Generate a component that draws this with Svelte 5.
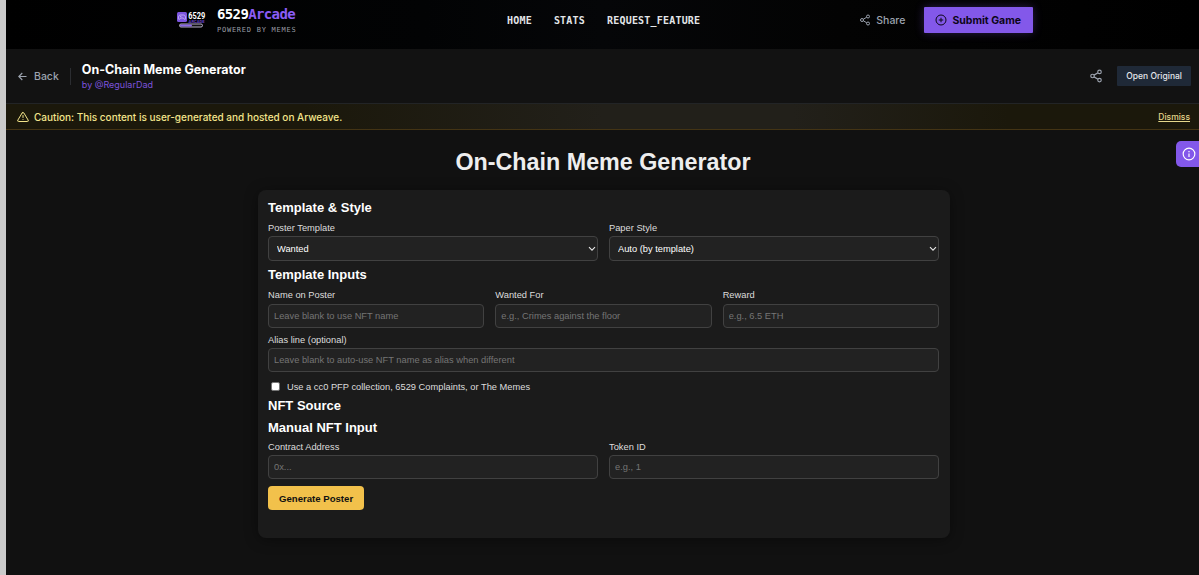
<script>
  let template = $state("wanted");
  let paper = $state("auto");
  let useCollection = $state(false);
  let showCaution = $state(true);

  const links = ["HOME", "STATS", "REQUEST_FEATURE"];
  const inputs = [
    { id: "name", label: "Name on Poster", placeholder: "Leave blank to use NFT name" },
    { id: "crime", label: "Wanted For", placeholder: "e.g., Crimes against the floor" },
    { id: "reward", label: "Reward", placeholder: "e.g., 6.5 ETH" }
  ];
</script>

{#snippet shareIcon(size)}
  <svg width={size} height={size} viewBox="0 0 24 24" fill="none" stroke="currentColor" stroke-width="2">
    <circle cx="18" cy="5" r="3" />
    <circle cx="6" cy="12" r="3" />
    <circle cx="18" cy="19" r="3" />
    <path d="M8.6 13.5l6.8 4M15.4 6.5l-6.8 4" />
  </svg>
{/snippet}

{#snippet chevron()}
  <svg class="chevron" width="8" height="6" viewBox="0 0 8 6" fill="none" stroke="#e8e8e8" stroke-width="1.1">
    <path d="M1 1.2l3 3 3-3" />
  </svg>
{/snippet}

<div class="page">
  <header>
    <div class="brand">
      <svg class="logo" width="29" height="19" viewBox="0 0 29 19">
        <rect x="0" y="1" width="10" height="10" rx="1.5" fill="#7c55e0" />
        <path d="M3.2 4h3.6c1.3 0 1.7 1.6 1.8 3.3.1 1.4-1.1 1.5-1.7.4L6.400 7H3.600L3.100 7.700c-.6 1.100-1.800 1-1.700-.4C1.500 5.600 1.900 4 3.200 4z" fill="none" stroke="#cbbcf6" stroke-width=".8" />
        <path d="M3.700 4.900v1.400M3 5.600h1.400" stroke="#cbbcf6" stroke-width=".6" />
        <text x="11.300" y="8.400" class="logo-num" textLength="17" lengthAdjust="spacingAndGlyphs">6529</text>
        <text x="11.600" y="12" class="logo-sub" textLength="16" lengthAdjust="spacingAndGlyphs">ARCADE</text>
        <rect x="2.500" y="13" width="23" height="3" rx="1.500" fill="#111" stroke="#c9c2dc" stroke-width=".9" />
        <rect x="3" y="13.500" width="12" height="2" rx="1" fill="#8b68ea" />
      </svg>
      <div class="brand-text">
        <div class="brand-name">6529<span>Arcade</span></div>
        <div class="tagline">POWERED BY MEMES</div>
      </div>
    </div>
    <nav>
      {#each links as link}
        <a href="#{link.toLowerCase()}">{link}</a>
      {/each}
    </nav>
    <div class="actions">
      <button class="share">{@render shareIcon(12)}<span>Share</span></button>
      <button class="submit">
        <svg width="12" height="12" viewBox="0 0 24 24" fill="none" stroke="currentColor" stroke-width="2">
          <circle cx="12" cy="12" r="10" />
          <path d="M12 7.500v9M7.500 12h9" />
        </svg>
        <span>Submit Game</span>
      </button>
    </div>
  </header>

  <div class="toolbar">
    <button class="back">
      <svg width="9" height="9" viewBox="0 0 9 9" fill="none" stroke="currentColor" stroke-width="1.100">
        <path d="M8.500 4.500H1M4.300 1L.8 4.500 4.300 8" />
      </svg>
      <span>Back</span>
    </button>
    <div class="game">
      <div class="game-title">On-Chain Meme Generator</div>
      <div class="author">by @RegularDad</div>
    </div>
    <button class="icon-btn">{@render shareIcon(14)}</button>
    <button class="original">Open Original</button>
  </div>

  {#if showCaution}
    <div class="caution">
      <svg width="12" height="12" viewBox="0 0 24 24" fill="none" stroke="currentColor" stroke-width="2" stroke-linejoin="round" stroke-linecap="round">
        <path d="M10.300 3.900L1.800 18a2 2 0 0 0 1.700 3h17a2 2 0 0 0 1.700-3L13.700 3.900a2 2 0 0 0-3.400 0z" />
        <path d="M12 9v4M12 17h.01" />
      </svg>
      <span class="caution-text">Caution: This content is user-generated and hosted on Arweave.</span>
      <button class="dismiss" onclick={() => (showCaution = false)}>Dismiss</button>
    </div>
  {/if}

  <main>
    <h1>On-Chain Meme Generator</h1>
    <section class="card">
      <h2>Template &amp; Style</h2>
      <div class="row">
        <div class="field">
          <label for="template">Poster Template</label>
          <div class="select">
            <select id="template" bind:value={template}>
              <option value="wanted">Wanted</option>
            </select>
            {@render chevron()}
          </div>
        </div>
        <div class="field">
          <label for="paper">Paper Style</label>
          <div class="select">
            <select id="paper" bind:value={paper}>
              <option value="auto">Auto (by template)</option>
            </select>
            {@render chevron()}
          </div>
        </div>
      </div>

      <h2 class="inputs-title">Template Inputs</h2>
      <div class="row">
        {#each inputs as item}
          <div class="field">
            <label for={item.id}>{item.label}</label>
            <input id={item.id} type="text" placeholder={item.placeholder} />
          </div>
        {/each}
      </div>
      <div class="field alias">
        <label for="alias">Alias line (optional)</label>
        <input id="alias" type="text" placeholder="Leave blank to auto-use NFT name as alias when different" />
      </div>
      <label class="check">
        <input type="checkbox" bind:checked={useCollection} />
        <span>Use a cc0 PFP collection, 6529 Complaints, or The Memes</span>
      </label>

      <h2 class="source-title">NFT Source</h2>
      <h2 class="manual-title">Manual NFT Input</h2>
      <div class="row">
        <div class="field">
          <label for="contract">Contract Address</label>
          <input id="contract" type="text" placeholder="0x..." />
        </div>
        <div class="field">
          <label for="token">Token ID</label>
          <input id="token" type="text" placeholder="e.g., 1" />
        </div>
      </div>
      <button class="generate">Generate Poster</button>
    </section>
  </main>

  <button class="info" aria-label="Info">
    <svg width="14" height="14" viewBox="0 0 24 24" fill="none" stroke="currentColor" stroke-width="2">
      <circle cx="12" cy="12" r="10" />
      <path d="M12 11v6M12 7v2" />
    </svg>
  </button>
</div>

<style>
  :global(body) {
    margin: 0;
    overflow: hidden;
    background: #111;
  }

  .page {
    position: relative;
    box-sizing: border-box;
    height: 575px;
    border-left: 6px solid #cbcbcb;
    background: #111;
    color: #fff;
    font-family: Inter, sans-serif;
  }

  button {
    display: flex;
    align-items: center;
    border: 0;
    padding: 0;
    background: none;
    font-family: inherit;
    cursor: pointer;
    white-space: nowrap;
  }

  svg {
    flex: none;
    display: block;
  }

  header {
    box-sizing: border-box;
    display: flex;
    align-items: center;
    height: 49px;
    padding: 0 166px 9px 171px;
    background: linear-gradient(90deg, #000, #020304 35%, #050608 50%, #030303 70%, #000);
  }

  .brand {
    display: flex;
    align-items: center;
    width: 330px;
    font-family: "DejaVu Sans Mono", monospace;
  }

  .logo {
    margin: 1px 11px 0 0;
  }

  .logo-num {
    fill: #fff;
    font: bold 9px Roboto, sans-serif;
  }

  .logo-sub {
    fill: #6a46c4;
    font: bold 4px Roboto, sans-serif;
  }

  .brand-name {
    height: 17px;
    font-size: 14px;
    font-weight: 700;
    line-height: 17px;
    letter-spacing: -0.63px;
  }

  .brand-name span {
    color: #8b5cf6;
  }

  .tagline {
    margin-top: 2px;
    color: #9a9da5;
    font-size: 7px;
    line-height: 10px;
    letter-spacing: 0.75px;
  }

  nav {
    display: flex;
    gap: 22px;
  }

  nav a {
    color: #e3e5e8;
    font-family: "DejaVu Sans Mono", monospace;
    font-size: 10px;
    font-weight: 700;
    letter-spacing: 0.2px;
    text-decoration: none;
  }

  .actions {
    display: flex;
    align-items: center;
    margin-left: auto;
  }

  .share {
    gap: 5px;
    margin-right: 19px;
    color: #9ca3af;
    font-size: 10.5px;
    font-weight: 500;
  }

  .submit {
    gap: 5px;
    height: 26px;
    padding: 0 12px 0 11px;
    border-radius: 1px;
    background: #8358ea;
    box-shadow: 0 0 10px rgba(139, 92, 246, 0.3);
    color: #0c0618;
    font-size: 10.5px;
    font-weight: 700;
  }

  .toolbar {
    box-sizing: border-box;
    display: flex;
    align-items: center;
    height: 55px;
    padding: 0 8px 0 12px;
    border-bottom: 1px solid #222426;
    background: #121212;
  }

  .back {
    gap: 7px;
    padding-right: 11px;
    height: 17px;
    border-right: 1px solid #2b2d31;
    color: #9ca3af;
    font-size: 10.5px;
    font-weight: 500;
  }

  .game {
    flex: 1;
    padding-left: 11px;
  }

  .game-title {
    font-size: 12.5px;
    font-weight: 700;
    line-height: 17px;
  }

  .author {
    color: #7c52dc;
    font-size: 9px;
    line-height: 13px;
  }

  .icon-btn {
    margin-right: 14px;
    color: #9ca3af;
  }

  .original {
    height: 20px;
    padding: 0 9px;
    border-radius: 1px;
    background: #1f2937;
    color: #e5e7eb;
    font-size: 8.5px;
    font-weight: 500;
  }

  .caution {
    box-sizing: border-box;
    display: flex;
    align-items: center;
    height: 26px;
    padding: 0 9px 0 11px;
    border-bottom: 1px solid #443414;
    background: linear-gradient(90deg, #1b180b, #1b180b 25%, #22201a 50%, #22201a 66%, #1b180b 84%);
    color: #f3e58b;
  }

  .caution-text {
    flex: 1;
    margin-left: 5px;
    font-size: 10px;
    font-weight: 500;
  }

  .dismiss {
    color: #e5d78c;
    font-size: 8.5px;
    font-weight: 500;
    text-decoration: underline;
  }

  main {
    padding-top: 18px;
    color: #eee;
    font-family: "Liberation Sans", Arial, sans-serif;
  }

  h1 {
    margin: 0 0 14px;
    padding-left: 1px;
    font-size: 23.3px;
    line-height: 28px;
    text-align: center;
  }

  .card {
    box-sizing: border-box;
    width: 692px;
    height: 348px;
    margin-left: 251.5px;
    padding: 9px 10.5px 0;
    border-radius: 8px;
    background: #1b1b1b;
    box-shadow: 0 2px 14px rgba(0, 0, 0, 0.4);
  }

  h2 {
    margin: 0 0 4px;
    color: #fff;
    font-size: 13px;
    line-height: 18px;
  }

  .row {
    display: flex;
    gap: 11px;
  }

  .field {
    flex: 1;
    min-width: 0;
  }

  label {
    display: block;
    margin-bottom: 1px;
    color: #ddd;
    font-size: 9.3px;
    line-height: 14px;
  }

  .select {
    position: relative;
  }

  select,
  input[type="text"] {
    box-sizing: border-box;
    display: block;
    width: 100%;
    height: 24px;
    margin: 0;
    padding: 0 5px;
    border: 1px solid #414141;
    border-radius: 4px;
    outline: 0;
    background: #222;
    color: #fff;
    font-family: inherit;
    font-size: 9.3px;
  }

  select {
    appearance: none;
    height: 25px;
    padding: 0 8px;
  }

  .chevron {
    position: absolute;
    right: 2px;
    top: 10px;
    pointer-events: none;
  }

  input::placeholder {
    color: #757575;
    opacity: 1;
  }

  .inputs-title {
    margin-top: 5px;
  }

  .inputs-title + .row label {
    margin-bottom: 2px;
  }

  .alias {
    margin-top: 5px;
  }

  .check {
    display: flex;
    align-items: center;
    margin: 8px 0 0 3px;
  }

  .check input {
    appearance: none;
    width: 9px;
    height: 9px;
    margin: 0 7px 2px 0;
    border: 1px solid #767676;
    border-radius: 2px;
    box-sizing: border-box;
    background: #fff;
  }

  .source-title {
    margin-top: 3px;
  }

  .manual-title {
    margin-bottom: 3px;
  }

  .generate {
    height: 24px;
    margin-top: 7px;
    padding: 0 11px;
    border-radius: 4px;
    background: #f2c14b;
    color: #111;
    font-size: 9.6px;
    font-weight: 700;
  }

  .info {
    position: absolute;
    right: 0;
    top: 141px;
    width: 23px;
    height: 26px;
    padding-left: 6px;
    border-radius: 5px 0 0 5px;
    background: #8358ea;
    color: #fff;
  }
</style>
